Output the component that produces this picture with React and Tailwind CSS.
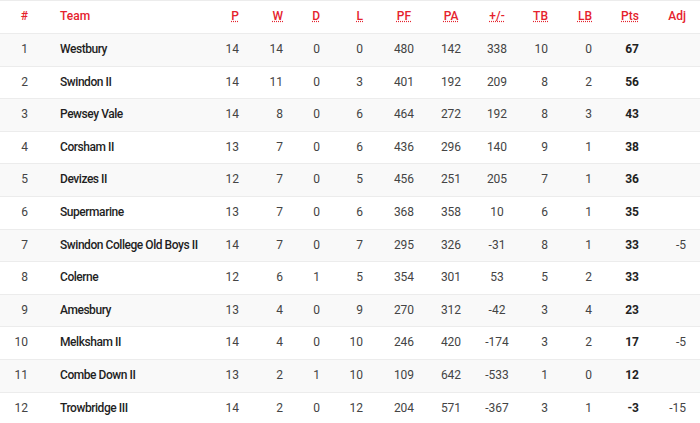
import React from 'react';

const rows = [
    [1, 'Westbury', 14, 14, 0, 0, 480, 142, 338, 10, 0, 67, ''],
    [2, 'Swindon II', 14, 11, 0, 3, 401, 192, 209, 8, 2, 56, ''],
    [3, 'Pewsey Vale', 14, 8, 0, 6, 464, 272, 192, 8, 3, 43, ''],
    [4, 'Corsham II', 13, 7, 0, 6, 436, 296, 140, 9, 1, 38, ''],
    [5, 'Devizes II', 12, 7, 0, 5, 456, 251, 205, 7, 1, 36, ''],
    [6, 'Supermarine', 13, 7, 0, 6, 368, 358, 10, 6, 1, 35, ''],
    [7, 'Swindon College Old Boys II', 14, 7, 0, 7, 295, 326, -31, 8, 1, 33, -5],
    [8, 'Colerne', 12, 6, 1, 5, 354, 301, 53, 5, 2, 33, ''],
    [9, 'Amesbury', 13, 4, 0, 9, 270, 312, -42, 3, 4, 23, ''],
    [10, 'Melksham II', 14, 4, 0, 10, 246, 420, -174, 3, 2, 17, -5],
    [11, 'Combe Down II', 13, 2, 1, 10, 109, 642, -533, 1, 0, 12, ''],
    [12, 'Trowbridge III', 14, 2, 0, 12, 204, 571, -367, 3, 1, -3, -15],
];

// width, alignment + padding for each column
const cols = [
    { w: 'w-[40px]', cls: 'text-right pr-[12px]' },
    { w: 'w-[160px]', cls: 'text-left pl-[20px]' },
    { w: 'w-[51px]', cls: 'text-right pr-[12px]' },
    { w: 'w-[44px]', cls: 'text-right pr-[12px]' },
    { w: 'w-[37px]', cls: 'text-right pr-[12px]' },
    { w: 'w-[43px]', cls: 'text-right pr-[12px]' },
    { w: 'w-[58px]', cls: 'text-center' },
    { w: 'w-[36px]', cls: 'text-center' },
    { w: 'w-[56px]', cls: 'text-center' },
    { w: 'w-[35px]', cls: 'text-right pr-[12px]' },
    { w: 'w-[44px]', cls: 'text-right pr-[12px]' },
    { w: 'w-[47px]', cls: 'text-right pr-[12px]' },
    { w: 'w-[49px]', cls: 'text-right pr-[14px]' },
];

const headers = [
    { label: '#' },
    { label: 'Team' },
    { label: 'P', title: 'Played' },
    { label: 'W', title: 'Won' },
    { label: 'D', title: 'Drawn' },
    { label: 'L', title: 'Lost' },
    { label: 'PF', title: 'Points For' },
    { label: 'PA', title: 'Points Against' },
    { label: '+/-', title: 'Points Difference' },
    { label: 'TB', title: 'Try Bonus' },
    { label: 'LB', title: 'Losing Bonus' },
    { label: 'Pts', title: 'Points' },
    { label: 'Adj' },
];

export default function App() {
    return (
        <div className="w-[700px] h-[423px] overflow-hidden bg-white" style={{ fontFamily: 'Roboto, "Liberation Sans", sans-serif' }}>
            <table className="w-full table-fixed border-collapse text-[12px]">
                <colgroup>
                    {cols.map((c, i) => (
                        <col key={i} className={c.w} />
                    ))}
                </colgroup>
                <thead>
                    <tr className="h-[33px] border-t border-b border-[#ececec]">
                        {headers.map((h, i) => (
                            <th key={i} className={`${cols[i].cls} font-medium text-[#e5222d] leading-[15.6px] py-0`}>
                                {h.title ? <abbr title={h.title}>{h.label}</abbr> : h.label}
                            </th>
                        ))}
                    </tr>
                </thead>
                <tbody>
                    {rows.map((r, ri) => (
                        <tr key={ri} className={`border-b border-[#ececec] ${ri % 2 === 0 ? 'bg-[#f9f9f9]' : 'bg-white'}`}>
                            {r.map((v, i) => (
                                <td
                                    key={i}
                                    className={`${cols[i].cls} py-2 leading-[15.6px] whitespace-nowrap ${
                                        i === 1
                                            ? 'font-medium text-[#1f1f1f] tracking-[-0.45px]'
                                            : i === 11
                                                ? 'font-bold text-[#222]'
                                                : 'text-[#444]'
                                    }`}
                                >
                                    {v}
                                </td>
                            ))}
                        </tr>
                    ))}
                </tbody>
            </table>
        </div>
    );
}
